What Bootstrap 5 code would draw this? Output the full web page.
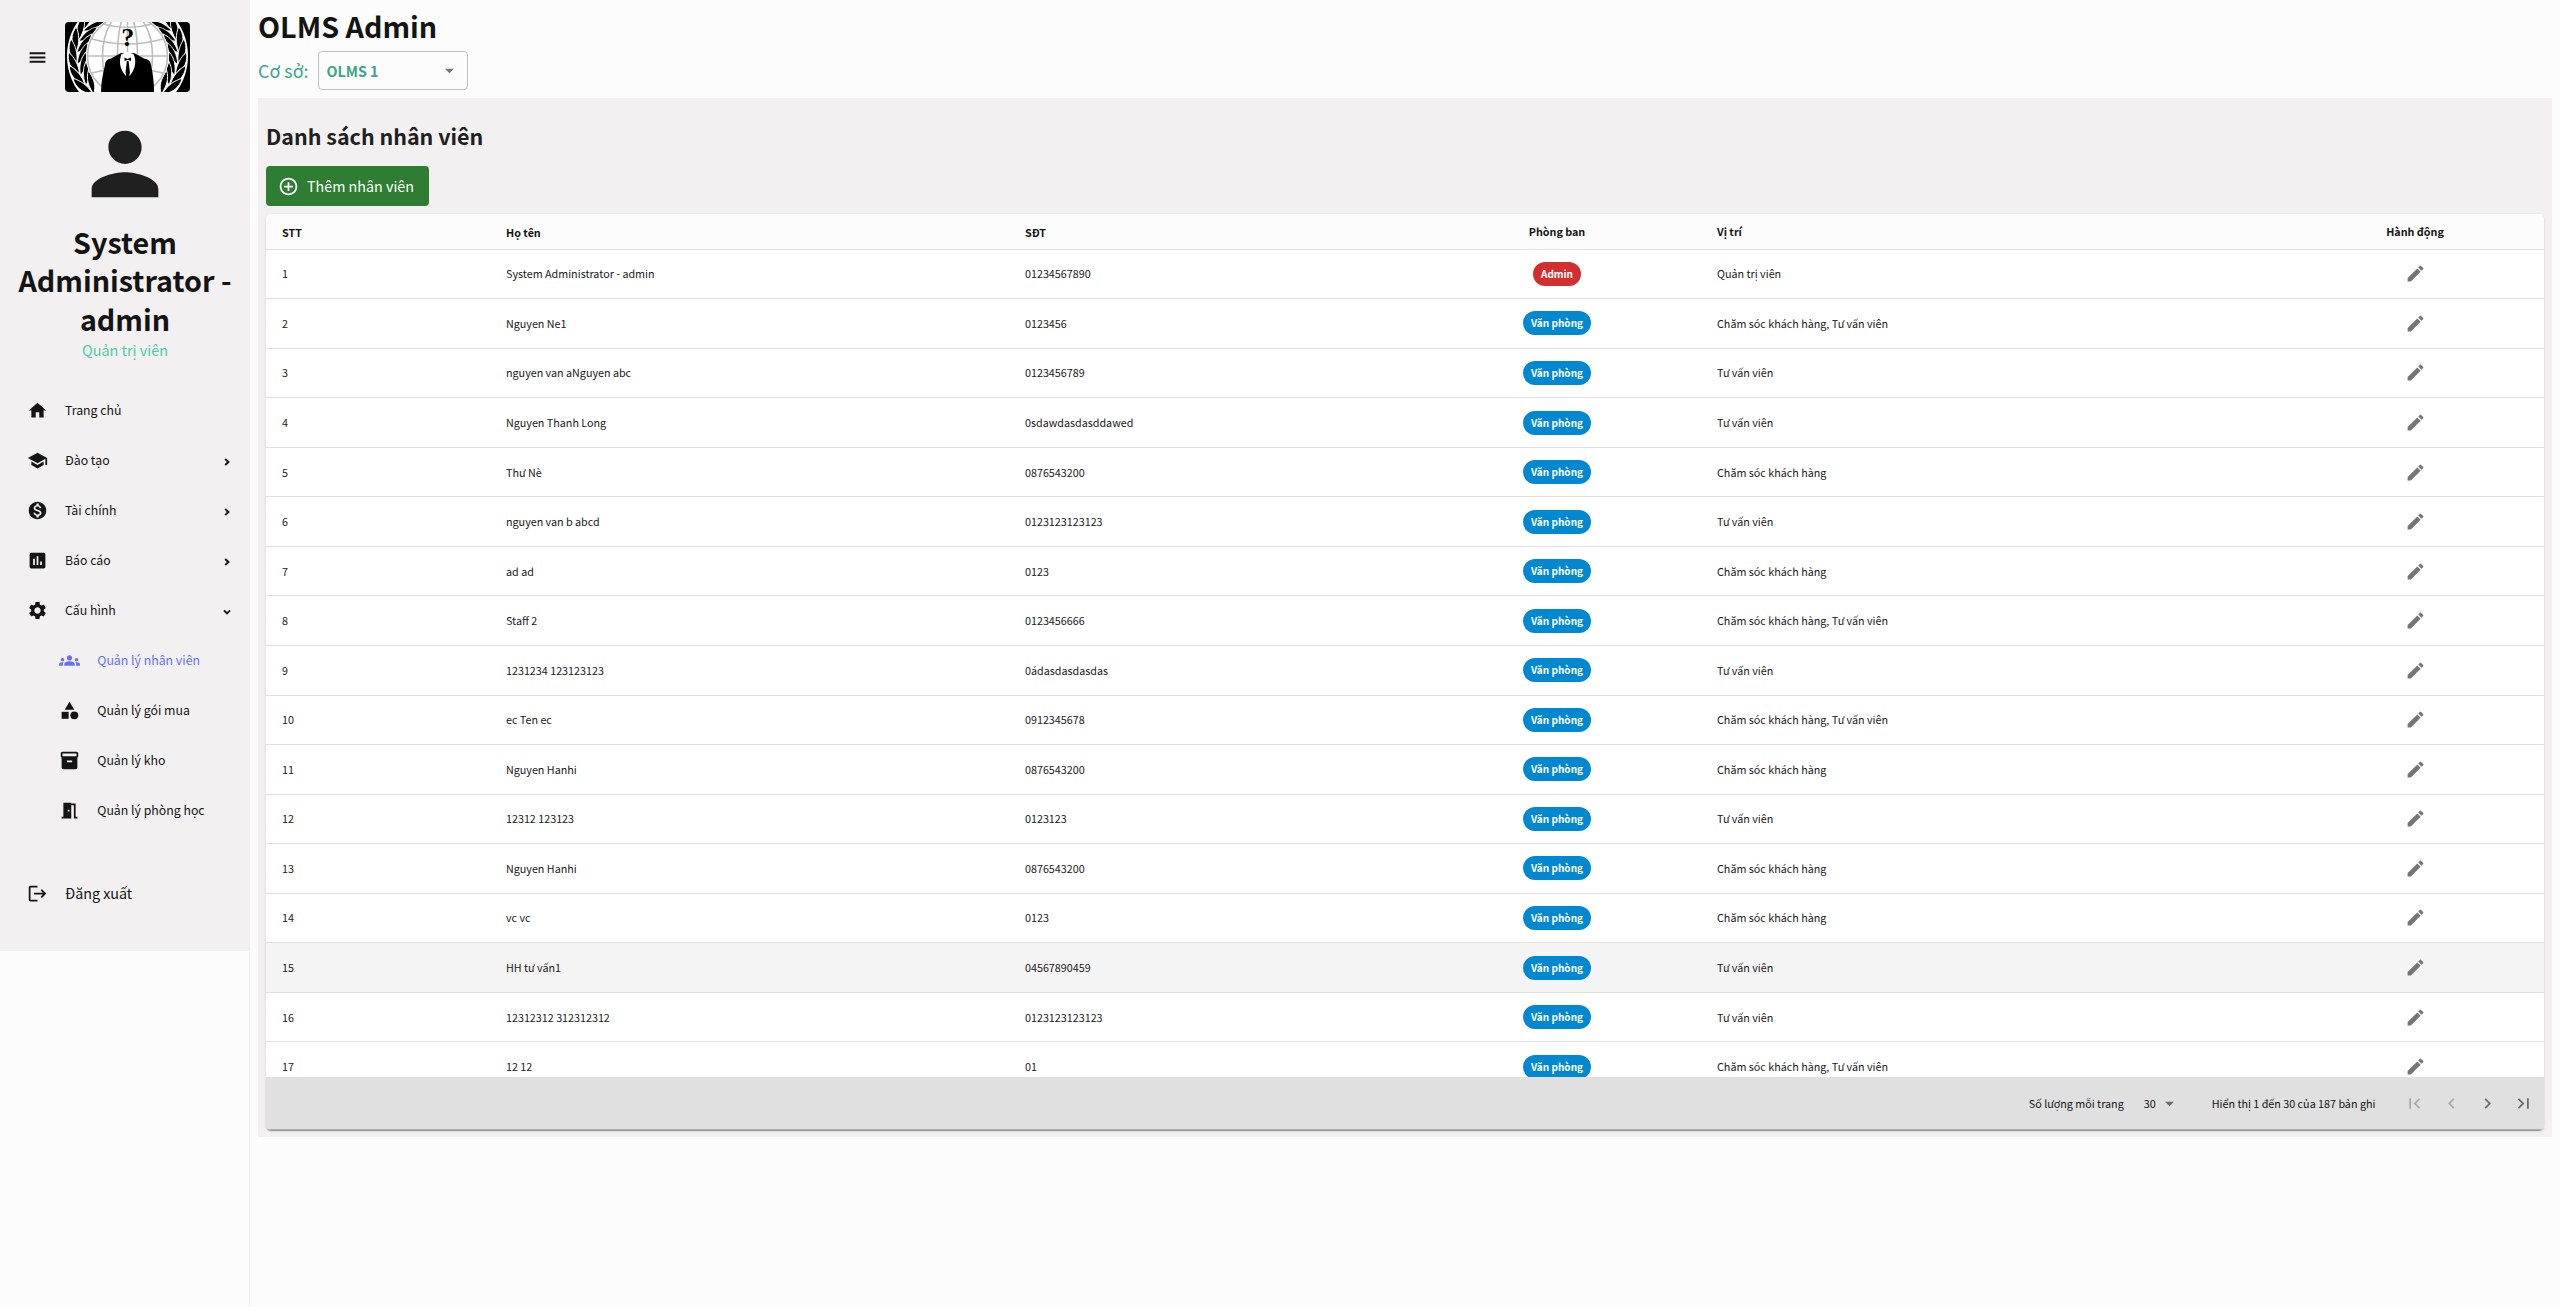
<!DOCTYPE html>
<html lang="vi">
<head>
<meta charset="utf-8">
<title>OLMS Admin</title>
<meta name="viewport" content="width=device-width, initial-scale=1">
<link href="https://cdn.jsdelivr.net/npm/bootstrap@5.3.0/dist/css/bootstrap.min.css" rel="stylesheet">
<style>
body{font-family:"Noto Sans CJK SC","Noto Sans",sans-serif;background:#fcfcfc;color:#141414;font-size:10.75px;line-height:17px}
svg{display:block;fill:currentColor;flex:none}
.shell{height:1307px}
.side{width:250px;border-right:1px solid #f2f0f1}
.side-inner{background:#f2f0f1;width:250px;height:951px}
.ico{width:21px;height:21px}
.brand{height:114px;padding:22px 0 0 26.7px}
.brand .ico{margin-top:24.8px}
.logo{margin-left:17.3px;border-radius:4px}
.avatar{width:100px;height:100px;color:#202020}
.who{font-size:28.7px;line-height:38.4px;font-weight:700;margin-top:9px}
.role{font-size:14.4px;line-height:22px;color:#4cceac;margin-top:1px}
.menu{margin-top:24px}
.item{height:50px;padding-left:26.6px;font-size:12.3px;line-height:20px}
.item .lbl{margin-left:17.4px}
.item.sub{padding-left:58.9px}
.item.active{color:#6870fa}
.item .arr{width:10px;height:10px;margin:4px 18px 0 auto}
.logout{margin-top:33px;font-size:14.3px!important}
.main{padding:0 8px}
.title{font-size:28.7px;line-height:38px;font-weight:700;margin:7px 0 0}
.campus{height:39px;margin-top:6px;color:#3da58a;font-size:17.9px}
.pick{width:150px;height:39px;border:1px solid #bfbfbf;border-radius:4px;margin-left:10px;padding:0 7px;font-size:14.3px;font-weight:700}
.pick svg{color:#757575}
.panel{background:#f2f0f1;height:1039px;margin-top:8px;padding:19px 8px 0}
.h-list{font-size:21.45px;line-height:38px;font-weight:700;margin:0 0 11px;color:#202020}
.add{background:#2e7d32;color:#fff;width:163px;height:40px;border-radius:4px;padding:0 0 0 11px;font-size:14.3px;line-height:22px;font-weight:400}
.add:hover{background:#2e7d32;color:#fff}
.sheet{margin-top:8px;height:916px;border-radius:5px;background:#fff;overflow:hidden;box-shadow:0 2px 1px -1px rgba(0,0,0,.2),0 1px 1px rgba(0,0,0,.14),0 1px 3px rgba(0,0,0,.12)}
.rows{height:863px;overflow:hidden}
.grid{width:2278px;table-layout:fixed;border-collapse:separate;border-spacing:0}
.grid th,.grid td{padding:0 16px;border-bottom:1px solid #e0e0e0;vertical-align:middle;white-space:nowrap}
.grid th{height:35.6px;background:#fcfcfc;font-weight:700}
.grid th.low{padding-top:2px}
.grid td{height:49.56px;color:#202020}
.grid .mid{text-align:center}
.grid tr.hov td{background:#f4f4f4}
.pill{display:inline-block;height:24px;line-height:24px;border-radius:12px;padding:0 8px;color:#fff;font-size:10.05px;font-weight:700;background:#0288d1;vertical-align:middle}
.pill.adm{background:#d32f2f}
.pen{margin:0 auto;color:#757575}
.foot{height:53px;background:#e0e0e0;border-bottom:1px solid #a9a9a9;padding-right:10px}
.foot svg{color:#6a6a6a}
.foot .off{color:#a9a9a9}
.f-b{margin-left:20px}
.f-c{margin-left:3px}
.f-d{margin-left:32px}
.nav-b{margin-left:29px;gap:15.2px}
</style>
</head>
<body>
<svg width="0" height="0" class="position-absolute">
  <symbol id="pencil" viewBox="0 0 24 24"><path d="M3 17.25V21h3.75L17.81 9.94l-3.75-3.75L3 17.25zM20.71 7.04c.39-.39.39-1.02 0-1.41l-2.34-2.34a.9959.9959 0 0 0-1.41 0l-1.83 1.83 3.75 3.75 1.83-1.83z"/></symbol>
  <symbol id="drop" viewBox="0 0 24 24"><path d="m7 10 5 5 5-5z"/></symbol>
  <symbol id="chev" viewBox="0 0 10 10"><path d="M3.2 2 6.4 5 3.2 8" fill="none" stroke="currentColor" stroke-width="2"/></symbol>
</svg>
<div class="shell d-flex">
  <aside class="side flex-shrink-0">
    <div class="side-inner">
      <div class="brand d-flex align-items-start">
        <svg class="ico" viewBox="0 0 24 24"><path d="M3 18h18v-2.200H3zm0-5h18v-2.200H3zM3 6v2.200h18V6z"/></svg>
        <svg class="logo" width="125" height="70" viewBox="0 0 125 70">
          <defs>
            <g id="leafpair" fill="#000" stroke="#fff" stroke-width=".9">
              <path d="M12 43C4 37 2 27 5.500 19 10 25 13 33 12 43z"/>
              <path d="M12.500 44C13 34 16 27 22.500 22 22.500 32 19 40 12.500 44z"/>
            </g>
            <g id="wreath">
              <use href="#leafpair" transform="rotate(54 62.5 34)"/><use href="#leafpair" transform="rotate(41 62.5 34)"/><use href="#leafpair" transform="rotate(28 62.5 34)"/><use href="#leafpair" transform="rotate(15 62.5 34)"/><use href="#leafpair" transform="rotate(2 62.5 34)"/><use href="#leafpair" transform="rotate(-11 62.5 34)"/><use href="#leafpair" transform="rotate(-24 62.5 34)"/><use href="#leafpair" transform="rotate(-37 62.5 34)"/>
            </g>
          </defs>
          <rect width="125" height="70" fill="#000"/>
          <circle cx="62.5" cy="34" r="60.5" fill="#fff"/>
          <use href="#wreath"/><use href="#wreath" transform="matrix(-1 0 0 1 125 0)"/>
          <circle cx="62.5" cy="34" r="41.500" fill="#fff"/>
          <g fill="none" stroke="#bdbdbd" stroke-width="1.6">
            <circle cx="62.5" cy="34" r="40"/><ellipse cx="62.5" cy="34" rx="25" ry="44"/><ellipse cx="62.5" cy="34" rx="10" ry="44"/>
            <path d="M22.500 34H102.500M62.500-6V74M27 17Q62.500 27 98 17M38 2Q62.500 9 87 2M27 51Q62.500 42 98 51"/>
          </g>
          <path d="M36 70C36 60 38 52 40 43 40.500 38.500 42 37.500 46 36.500L56 31H69L79 36.500C83 37.500 85.500 38.500 86 43 88 52 89 60 89 70z" fill="#000"/>
          <path d="M56.500 32C54 38 54 47 61 54L62.500 42 64.500 54C71 47 71.500 38 68.500 32L62.500 30z" fill="#fff"/>
          <path d="M59.500 35.500 62.500 37 66 35.500V39L62.800 37.800 59.500 39zM61.800 39H63.600L65 51 62.700 55 60.500 51z" fill="#000"/>
          <text x="62.700" y="24" text-anchor="middle" font-family="Liberation Serif,serif" font-weight="700" font-size="26" fill="#000">?</text>
        </svg>
      </div>
      <svg class="avatar mx-auto" viewBox="0 0 24 24"><path d="M12 12c2.210 0 4-1.790 4-4s-1.790-4-4-4-4 1.790-4 4 1.790 4 4 4zm0 2c-2.670 0-8 1.340-8 4v2h16v-2c0-2.660-5.330-4-8-4z"/></svg>
      <div class="who text-center">System<br>Administrator -<br>admin</div>
      <div class="role text-center">Quản trị viên</div>
      <nav class="menu">
        <div class="item d-flex align-items-center"><svg class="ico" viewBox="0 0 24 24"><path d="M10 20v-6h4v6h5v-8h3L12 3 2 12h3v8z"/></svg><span class="lbl">Trang chủ</span></div>
        <div class="item d-flex align-items-center"><svg class="ico" viewBox="0 0 24 24"><path d="M5 13.180v4L12 21l7-3.820v-4L12 17l-7-3.820zM12 3 1 9l11 6 9-4.910V17h2V9L12 3z"/></svg><span class="lbl">Đào tạo</span><svg class="arr"><use href="#chev"/></svg></div>
        <div class="item d-flex align-items-center"><svg class="ico" viewBox="0 0 24 24"><path d="M12 2C6.480 2 2 6.480 2 12s4.480 10 10 10 10-4.480 10-10S17.520 2 12 2zm1.410 16.090V20h-2.670v-1.930c-1.710-.36-3.160-1.460-3.270-3.400h1.960c.1 1.050.82 1.870 2.650 1.870 1.960 0 2.400-.98 2.400-1.590 0-.83-.44-1.610-2.670-2.140-2.480-.6-4.180-1.620-4.180-3.670 0-1.720 1.390-2.840 3.110-3.210V4h2.670v1.950c1.860.45 2.790 1.860 2.850 3.390H14.300c-.05-1.110-.64-1.870-2.220-1.870-1.500 0-2.400.68-2.400 1.640 0 .84.65 1.390 2.670 1.910s4.180 1.390 4.180 3.910c-.01 1.830-1.380 2.830-3.120 3.160z"/></svg><span class="lbl">Tài chính</span><svg class="arr"><use href="#chev"/></svg></div>
        <div class="item d-flex align-items-center"><svg class="ico" viewBox="0 0 24 24"><path d="M19 3H5c-1.100 0-2 .9-2 2v14c0 1.100.9 2 2 2h14c1.100 0 2-.9 2-2V5c0-1.100-.9-2-2-2zM9 17H7v-7h2v7zm4 0h-2V7h2v10zm4 0h-2v-4h2v4z"/></svg><span class="lbl">Báo cáo</span><svg class="arr"><use href="#chev"/></svg></div>
        <div class="item d-flex align-items-center"><svg class="ico" viewBox="0 0 24 24"><path d="M19.140 12.940c.04-.3.060-.61.060-.94 0-.32-.02-.64-.07-.94l2.030-1.580c.18-.14.230-.41.120-.61l-1.920-3.320c-.12-.22-.37-.29-.59-.22l-2.390.96c-.5-.38-1.030-.7-1.620-.94l-.36-2.540c-.04-.24-.24-.41-.48-.41h-3.840c-.24 0-.43.17-.47.41l-.36 2.540c-.59.24-1.130.57-1.620.94l-2.390-.96c-.22-.08-.47 0-.59.22L2.740 8.870c-.12.21-.08.470.12.61l2.030 1.580c-.05.3-.09.630-.09.94s.02.640.07.940l-2.030 1.580c-.18.14-.23.410-.12.61l1.920 3.320c.12.220.370.290.590.220l2.390-.96c.5.380 1.030.7 1.620.940l.36 2.540c.05.240.240.410.480.410h3.840c.24 0 .440-.17.470-.41l.36-2.540c.59-.24 1.130-.56 1.620-.94l2.390.96c.22.080.470 0 .59-.22l1.920-3.320c.12-.22.070-.47-.12-.61l-2.010-1.580zM12 15.600c-1.980 0-3.600-1.620-3.600-3.600s1.620-3.600 3.600-3.600 3.600 1.620 3.600 3.600-1.620 3.600-3.600 3.600z"/></svg><span class="lbl">Cấu hình</span><svg class="arr" viewBox="0 0 10 10"><path d="M2 3.400 5 6.400 8 3.400" fill="none" stroke="currentColor" stroke-width="2"/></svg></div>
        <div class="item sub active d-flex align-items-center"><svg class="ico" viewBox="0 0 24 24"><path d="M12 12.750c1.630 0 3.070.39 4.240.9 1.080.48 1.760 1.560 1.760 2.730V18H6v-1.610c0-1.180.68-2.260 1.760-2.730 1.170-.52 2.610-.91 4.240-.91zM4 13c1.100 0 2-.9 2-2s-.9-2-2-2-2 .9-2 2 .9 2 2 2zm1.130 1.100c-.37-.06-.74-.1-1.130-.1-.99 0-1.930.21-2.780.58C.480 14.900 0 15.620 0 16.430V18h4.500v-1.610c0-.83.230-1.610.63-2.290zM20 13c1.100 0 2-.9 2-2s-.9-2-2-2-2 .9-2 2 .9 2 2 2zm4 3.430c0-.81-.48-1.530-1.220-1.850-.85-.37-1.790-.58-2.780-.58-.39 0-.76.040-1.130.1.400.68.630 1.460.63 2.290V18H24v-1.570zM12 6c1.660 0 3 1.340 3 3s-1.340 3-3 3-3-1.340-3-3 1.340-3 3-3z"/></svg><span class="lbl">Quản lý nhân viên</span></div>
        <div class="item sub d-flex align-items-center"><svg class="ico" viewBox="0 0 24 24"><path d="m12 2-5.500 9h11z"/><circle cx="17.500" cy="17.500" r="4.500"/><path d="M3 13.500h8v8H3z"/></svg><span class="lbl">Quản lý gói mua</span></div>
        <div class="item sub d-flex align-items-center"><svg class="ico" viewBox="0 0 24 24"><path d="M20 2H4c-1 0-2 .9-2 2v3.010c0 .72.430 1.340 1 1.690V20c0 1.100 1.100 2 2 2h14c.9 0 2-.9 2-2V8.700c.57-.35 1-.97 1-1.690V4c0-1.100-1-2-2-2zm-5 12H9v-2h6v2zm5-7H4V4h16v3z"/></svg><span class="lbl">Quản lý kho</span></div>
        <div class="item sub d-flex align-items-center"><svg class="ico" viewBox="0 0 24 24"><path d="M14 6v15H3v-2h2V3h9v1h5v15h2v2h-4V6h-3zm-4 5v2h2v-2h-2z"/></svg><span class="lbl">Quản lý phòng học</span></div>
        <div class="item logout d-flex align-items-center"><svg class="ico" viewBox="0 0 24 24"><path d="m17 7-1.410 1.410L18.170 11H8v2h10.170l-2.580 2.580L17 17l5-5zM4 5h8V3H4c-1.100 0-2 .9-2 2v14c0 1.100.9 2 2 2h8v-2H4V5z"/></svg><span class="lbl">Đăng xuất</span></div>
      </nav>
    </div>
  </aside>
  <main class="main flex-grow-1">
    <h1 class="title">OLMS Admin</h1>
    <div class="campus d-flex align-items-center"><span>Cơ sở:</span>
      <div class="pick d-flex align-items-center justify-content-between"><span>OLMS 1</span><svg class="ico"><use href="#drop"/></svg></div>
    </div>
    <section class="panel">
      <h2 class="h-list">Danh sách nhân viên</h2>
      <button class="add btn d-flex align-items-center"><svg class="ico" viewBox="0 0 24 24"><path d="M13 7h-2v4H7v2h4v4h2v-4h4v-2h-4V7zm-1-5C6.480 2 2 6.480 2 12s4.480 10 10 10 10-4.480 10-10S17.520 2 12 2zm0 18c-4.410 0-8-3.590-8-8s3.590-8 8-8 8 3.590 8 8-3.590 8-8 8z"/></svg><span class="ms-2">Thêm nhân viên</span></button>
      <div class="sheet">
        <div class="rows">
          <table class="grid">
            <colgroup><col width="224"><col width="519"><col width="404"><col width="288"><col width="585"><col width="258"></colgroup>
            <thead><tr><th class="low">STT</th><th class="low">Họ tên</th><th class="low">SĐT</th><th class="mid">Phòng ban</th><th>Vị trí</th><th class="mid">Hành động</th></tr></thead>
            <tbody id="staff"></tbody>
          </table>
        </div>
        <div class="foot d-flex align-items-center justify-content-end">
          <span class="f-a">Số lượng mỗi trang</span>
          <span class="f-b">30</span><svg class="ico f-c"><use href="#drop"/></svg>
          <span class="f-d">Hiển thị 1 đến 30 của 187 bản ghi</span>
          <div class="nav-b d-flex">
            <svg class="ico off" viewBox="0 0 24 24"><path d="M18.410 16.590 13.820 12l4.590-4.590L17 6l-6 6 6 6zM6 6h2v12H6z"/></svg>
            <svg class="ico off" viewBox="0 0 24 24"><path d="M15.410 7.410 14 6l-6 6 6 6 1.410-1.410L10.830 12z"/></svg>
            <svg class="ico" viewBox="0 0 24 24"><path d="M10 6 8.590 7.410 13.170 12l-4.580 4.590L10 18l6-6z"/></svg>
            <svg class="ico" viewBox="0 0 24 24"><path d="M5.590 7.410 10.180 12l-4.590 4.590L7 18l6-6-6-6zM16 6h2v12h-2z"/></svg>
          </div>
        </div>
      </div>
    </section>
  </main>
</div>
<script>
const care = 'Chăm sóc khách hàng', advise = 'Tư vấn viên', both = care + ', ' + advise;
const staff = [
  ['System Administrator - admin', '01234567890', 'Quản trị viên'],
  ['Nguyen Ne1', '0123456', both],
  ['nguyen van aNguyen abc', '0123456789', advise],
  ['Nguyen Thanh Long', '0sdawdasdasddawed', advise],
  ['Thư Nè', '0876543200', care],
  ['nguyen van b abcd', '0123123123123', advise],
  ['ad ad', '0123', care],
  ['Staff 2', '0123456666', both],
  ['1231234 123123123', '0ádasdasdasdas', advise],
  ['ec Ten ec', '0912345678', both],
  ['Nguyen Hanhi', '0876543200', care],
  ['12312 123123', '0123123', advise],
  ['Nguyen Hanhi', '0876543200', care],
  ['vc vc', '0123', care],
  ['HH tư vấn1', '04567890459', advise],
  ['12312312 312312312', '0123123123123', advise],
  ['12 12', '01', both]
];
document.getElementById('staff').innerHTML = staff.map((r, i) =>
  `<tr class="${i === 14 ? 'hov' : ''}"><td>${i + 1}</td><td>${r[0]}</td><td>${r[1]}</td>` +
  `<td class="mid"><span class="pill ${i ? '' : 'adm'}">${i ? 'Văn phòng' : 'Admin'}</span></td><td>${r[2]}</td>` +
  `<td><svg class="ico pen"><use href="#pencil"/></svg></td></tr>`).join('');
</script>
<script src="https://cdn.jsdelivr.net/npm/bootstrap@5.3.0/dist/js/bootstrap.bundle.min.js"></script>
</body>
</html>
